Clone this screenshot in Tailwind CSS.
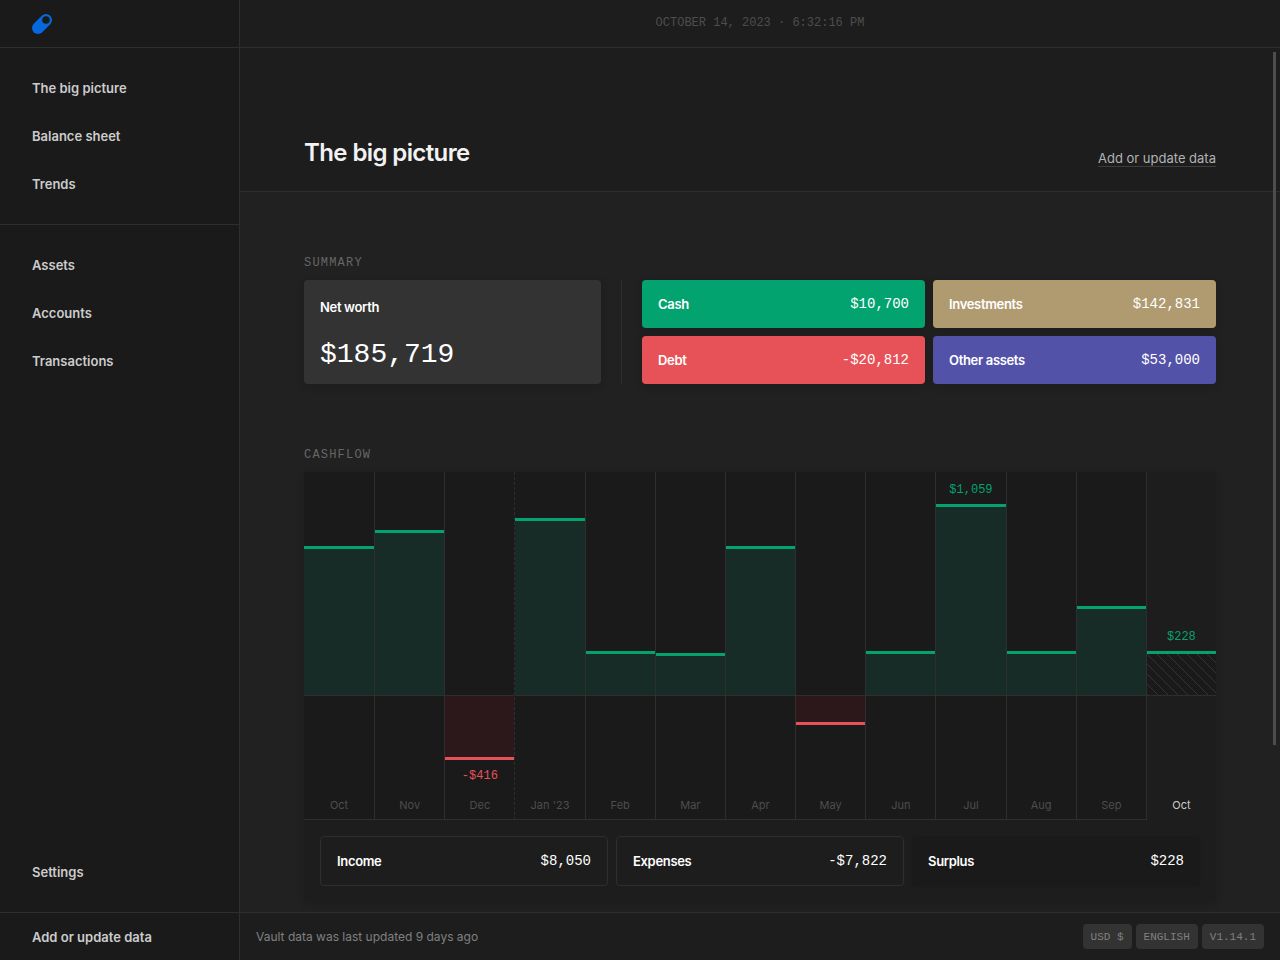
<!DOCTYPE html>
<html lang="en">
<head>
<meta charset="utf-8">
<title>The big picture</title>
<script src="https://cdn.jsdelivr.net/npm/@tailwindcss/browser@4"></script>
</head>
<body class="flex h-screen overflow-hidden bg-[#212121] font-['Inter','Liberation_Sans',sans-serif] text-[13px] leading-5 text-white antialiased">

<aside class="flex w-60 shrink-0 flex-col border-r border-[#2e2e2e] bg-[#1a1a1a] font-semibold text-[#cccccc]">
  <div class="flex h-12 shrink-0 items-center border-b border-[#2e2e2e] px-8">
    <a href="#" aria-label="Home">
      <svg class="block size-5" viewBox="0 0 20 20" fill="none" aria-hidden="true">
        <path d="M6 14 14 6" stroke="#0568dc" stroke-width="12" stroke-linecap="round"/>
        <circle cx="14" cy="6" r="3.8" fill="#1a1a1a"/>
      </svg>
    </a>
  </div>
  <nav class="flex flex-1 flex-col">
    <div class="flex flex-col border-b border-[#2e2e2e] py-4">
      <a href="#" class="flex h-12 items-center px-8">The big picture</a>
      <a href="#" class="flex h-12 items-center px-8">Balance sheet</a>
      <a href="#" class="flex h-12 items-center px-8">Trends</a>
    </div>
    <div class="flex flex-col py-4">
      <a href="#" class="flex h-12 items-center px-8">Assets</a>
      <a href="#" class="flex h-12 items-center px-8">Accounts</a>
      <a href="#" class="flex h-12 items-center px-8">Transactions</a>
    </div>
    <a href="#" class="mt-auto mb-4 flex h-12 items-center px-8">Settings</a>
  </nav>
  <button type="button" class="flex h-12 shrink-0 items-center border-t border-[#2e2e2e] px-8">Add or update data</button>
</aside>

<div class="flex min-w-0 flex-1 flex-col">
  <div class="flex h-12 shrink-0 items-center justify-center border-b border-[#2e2e2e] bg-[#1d1d1d] font-['Liberation_Mono',monospace] text-xs text-[#4d4d4d]">
    <time class="leading-[17px]">OCTOBER 14, 2023 · 6:32:16 PM</time>
  </div>

  <main class="relative min-h-0 flex-1 overflow-hidden">
    <header class="flex h-36 items-end justify-between border-b border-[#2e2e2e] bg-[#1d1d1d] px-16 pb-6">
      <h1 class="text-2xl leading-7 font-semibold tracking-tight text-[#f2f2f2]">The big picture</h1>
      <a href="#" class="border-b border-[#3d3d3d] leading-4 text-[#b3b3b3]">Add or update data</a>
    </header>

    <section class="px-16 pt-16">
      <h2 class="mb-[10px] font-['Liberation_Mono',monospace] text-xs leading-[14px] tracking-widest text-[#666666]">SUMMARY</h2>
      <div class="grid grid-cols-[297fr_1px_574fr] gap-x-5">
        <div class="flex flex-col justify-between rounded bg-[#333333] p-4 shadow-[0_2px_8px_rgba(0,0,0,0.15)]">
          <h3 class="leading-[22px] font-semibold tracking-tight">Net worth</h3>
          <p class="font-['Liberation_Mono',monospace] text-[28px] leading-[26px]">$185,719</p>
        </div>
        <div class="bg-[#2e2e2e]"></div>
        <div class="grid grid-cols-2 gap-2">
          <div class="flex h-12 items-center justify-between rounded bg-[#02a36f] px-4 shadow-[0_2px_8px_rgba(0,0,0,0.15)]">
            <h3 class="font-semibold tracking-tight">Cash</h3><p class="font-['Liberation_Mono',monospace] text-sm">$10,700</p>
          </div>
          <div class="flex h-12 items-center justify-between rounded bg-[#b09b71] px-4 shadow-[0_2px_8px_rgba(0,0,0,0.15)]">
            <h3 class="font-semibold tracking-tight">Investments</h3><p class="font-['Liberation_Mono',monospace] text-sm">$142,831</p>
          </div>
          <div class="flex h-12 items-center justify-between rounded bg-[#e75259] px-4 shadow-[0_2px_8px_rgba(0,0,0,0.15)]">
            <h3 class="font-semibold tracking-tight">Debt</h3><p class="font-['Liberation_Mono',monospace] text-sm">-$20,812</p>
          </div>
          <div class="flex h-12 items-center justify-between rounded bg-[#5352a9] px-4 shadow-[0_2px_8px_rgba(0,0,0,0.15)]">
            <h3 class="font-semibold tracking-tight">Other assets</h3><p class="font-['Liberation_Mono',monospace] text-sm">$53,000</p>
          </div>
        </div>
      </div>
    </section>

    <section class="px-16 pt-16">
      <h2 class="mb-[10px] font-['Liberation_Mono',monospace] text-xs leading-[14px] tracking-widest text-[#666666]">CASHFLOW</h2>
      <div class="overflow-hidden rounded bg-[#1d1d1d] shadow-[0_2px_8px_rgba(0,0,0,0.15)]">
        <div id="chart" class="grid grid-cols-13"></div>
        <div class="grid grid-cols-3 gap-2 p-4">
          <div class="flex h-[50px] items-center justify-between rounded border border-[#2e2e2e] px-4">
            <h3 class="font-semibold tracking-tight">Income</h3><p class="font-['Liberation_Mono',monospace] text-sm">$8,050</p>
          </div>
          <div class="flex h-[50px] items-center justify-between rounded border border-[#2e2e2e] px-4">
            <h3 class="font-semibold tracking-tight">Expenses</h3><p class="font-['Liberation_Mono',monospace] text-sm">-$7,822</p>
          </div>
          <div class="flex h-[50px] items-center justify-between rounded bg-[#1a1a1a] px-4 shadow-[0_1px_2px_rgba(0,0,0,0.1)]">
            <h3 class="font-semibold tracking-tight">Surplus</h3><p class="font-['Liberation_Mono',monospace] text-sm">$228</p>
          </div>
        </div>
      </div>
    </section>

    <div class="absolute top-1 right-1 h-[693px] w-[3px] bg-[#4d4d4d]"></div>
  </main>

  <footer class="flex h-12 shrink-0 items-center justify-between border-t border-[#2e2e2e] bg-[#1d1d1d] px-4">
    <p class="text-xs text-[#808080]">Vault data was last updated 9 days ago</p>
    <div class="flex gap-1 font-['Liberation_Mono',monospace] text-[11px] text-[#808080]">
      <button type="button" class="h-[25px] rounded bg-[#333333] px-2">USD $</button>
      <button type="button" class="h-[25px] rounded bg-[#333333] px-2">ENGLISH</button>
      <button type="button" class="h-[25px] rounded bg-[#333333] px-2">V1.14.1</button>
    </div>
  </footer>
</div>

<script>
  // Bar heights in pixels above (positive) or below (negative) the zero line.
  const months = [
    { name: "Oct", bar: 149 }, { name: "Nov", bar: 165 }, { name: "Dec", bar: -64, label: "-$416" },
    { name: "Jan '23", bar: 177, newYear: true }, { name: "Feb", bar: 44 }, { name: "Mar", bar: 42 },
    { name: "Apr", bar: 149 }, { name: "May", bar: -29 }, { name: "Jun", bar: 44 },
    { name: "Jul", bar: 191, label: "$1,059" }, { name: "Aug", bar: 44 }, { name: "Sep", bar: 89 },
    { name: "Oct", bar: 44, label: "$228", current: true }
  ];
  const hatch = `<svg class="block size-full" aria-hidden="true"><defs><pattern id="hatch" width="10" height="10" patternUnits="userSpaceOnUse"><path d="M0 0 10 10" stroke="#333333"/></pattern></defs><rect width="100%" height="100%" fill="url(#hatch)"/></svg>`;
  document.getElementById("chart").innerHTML = months.map((m, i) => {
    const edge = i === 0 ? "" : m.newYear ? "border-l border-l-[#2e2e2e] [border-left-style:dashed]" : "border-l border-l-[#2e2e2e]";
    const cell = m.current ? "" : "bg-[#1a1a1a]";
    const base = m.current ? "" : "border-b border-b-[#2e2e2e]";
    const fill = m.current ? "bg-[#1a1a1a]" : "bg-[#182c27]";
    const up = m.bar > 0
      ? `${m.label ? `<p class="mb-[7px] text-center font-['Liberation_Mono',monospace] text-xs leading-[14px] text-[#02a36f]">${m.label}</p>` : ""}
         <div class="border-t-3 border-[#02a36f] ${fill}" style="height:${m.bar}px">${m.current ? hatch : ""}</div>` : "";
    const down = m.bar < 0
      ? `<div class="border-b-3 border-[#e75259] bg-[#2c171b]" style="height:${-m.bar}px"></div>
         ${m.label ? `<p class="mt-[9px] text-center font-['Liberation_Mono',monospace] text-xs leading-[14px] text-[#e75259]">${m.label}</p>` : ""}` : "";
    return `<div class="${edge} ${cell}"><div class="${base}">
      <div class="flex h-[223px] flex-col justify-end">${up}</div>
      <div class="flex h-[124px] flex-col border-t border-[#2e2e2e] pb-1.5">${down}
        <p class="mt-auto text-center text-[11px] leading-4 ${m.current ? "text-[#cccccc]" : "text-[#4d4d4d]"}">${m.name}</p>
      </div></div></div>`;
  }).join("");
</script>
</body>
</html>
